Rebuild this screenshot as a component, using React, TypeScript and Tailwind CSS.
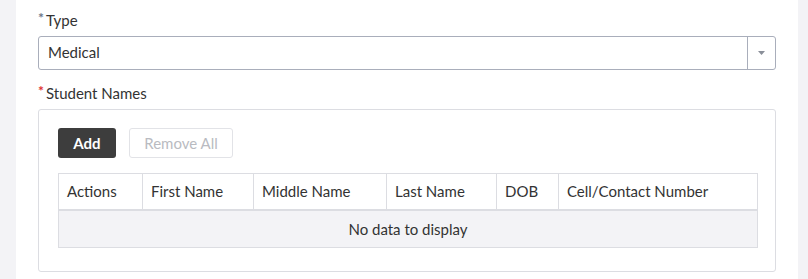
const columns = [
  { label: "Actions", width: "w-[84px]" },
  { label: "First Name", width: "w-[111px]" },
  { label: "Middle Name", width: "w-[133px]" },
  { label: "Last Name", width: "w-[110px]" },
  { label: "DOB", width: "w-[62px]" },
  { label: "Cell/Contact Number", width: "flex-1" },
];

function Label({ text, required }: { text: string; required?: "muted" | "red" }) {
  return (
    <div className="flex h-5 items-center text-[15px] leading-5 text-[#333]">
      {required && (
        <span
          className={
            required === "red"
              ? "mr-[2px] -mt-[4px] text-[14px] font-bold text-[#e0312f]"
              : "mr-[2px] -mt-[4px] text-[14px] font-bold text-[#6b7689]"
          }
        >
          *
        </span>
      )}
      {text}
    </div>
  );
}

export default function App() {
  return (
    <div className="flex h-[279px] w-[808px] bg-[#f3f3f6] font-['Lato',_'Open_Sans',_sans-serif]">
      <div className="ml-4 w-[782px] bg-white px-[22px] pt-[10px]">
        <Label text="Type" required="muted" />

        <div className="mt-[6px] flex h-[34px] items-stretch rounded-[3px] border border-[#a9aebb]">
          <div className="flex flex-1 items-center pb-[2px] pl-[9px] text-[15px] text-[#333]">Medical</div>
          <div className="flex w-[28px] items-center justify-center border-l border-[#a9aebb]">
            <svg width="7" height="4" viewBox="0 0 7 4">
              <path d="M0 0h7L3.5 4z" fill="#8a8f99" />
            </svg>
          </div>
        </div>

        <div className="mt-[13px]">
          <Label text="Student Names" required="red" />
        </div>

        <div className="mt-[6px] h-[163px] rounded-[3px] border border-[#dcdde2] pl-[19px] pr-[17px] pt-[18px]">
          <div className="flex gap-[13px]">
            <button
              type="button"
              className="h-[30px] w-[58px] rounded-[3px] bg-[#3d3d3d] text-[15px] font-bold text-white"
            >
              Add
            </button>
            <button
              type="button"
              className="h-[30px] w-[104px] rounded-[3px] border border-[#e2e3e7] bg-white text-[15px] text-[#b9bbc1]"
            >
              Remove All
            </button>
          </div>

          <div className="mt-[15px] border border-[#dcdde2]">
            <div className="flex h-[37px] border-b-2 border-[#dcdde2]">
              {columns.map((col, i) => (
                <div
                  key={col.label}
                  className={`${col.width} flex items-center pb-[1px] pl-[8px] text-[15px] text-[#333] ${
                    i < columns.length - 1 ? "border-r border-[#dcdde2]" : ""
                  }`}
                >
                  {col.label}
                </div>
              ))}
            </div>
            <div className="flex h-[36px] items-center justify-center bg-[#f3f3f6] text-[15px] text-[#333]">
              No data to display
            </div>
          </div>
        </div>
      </div>
    </div>
  );
}
